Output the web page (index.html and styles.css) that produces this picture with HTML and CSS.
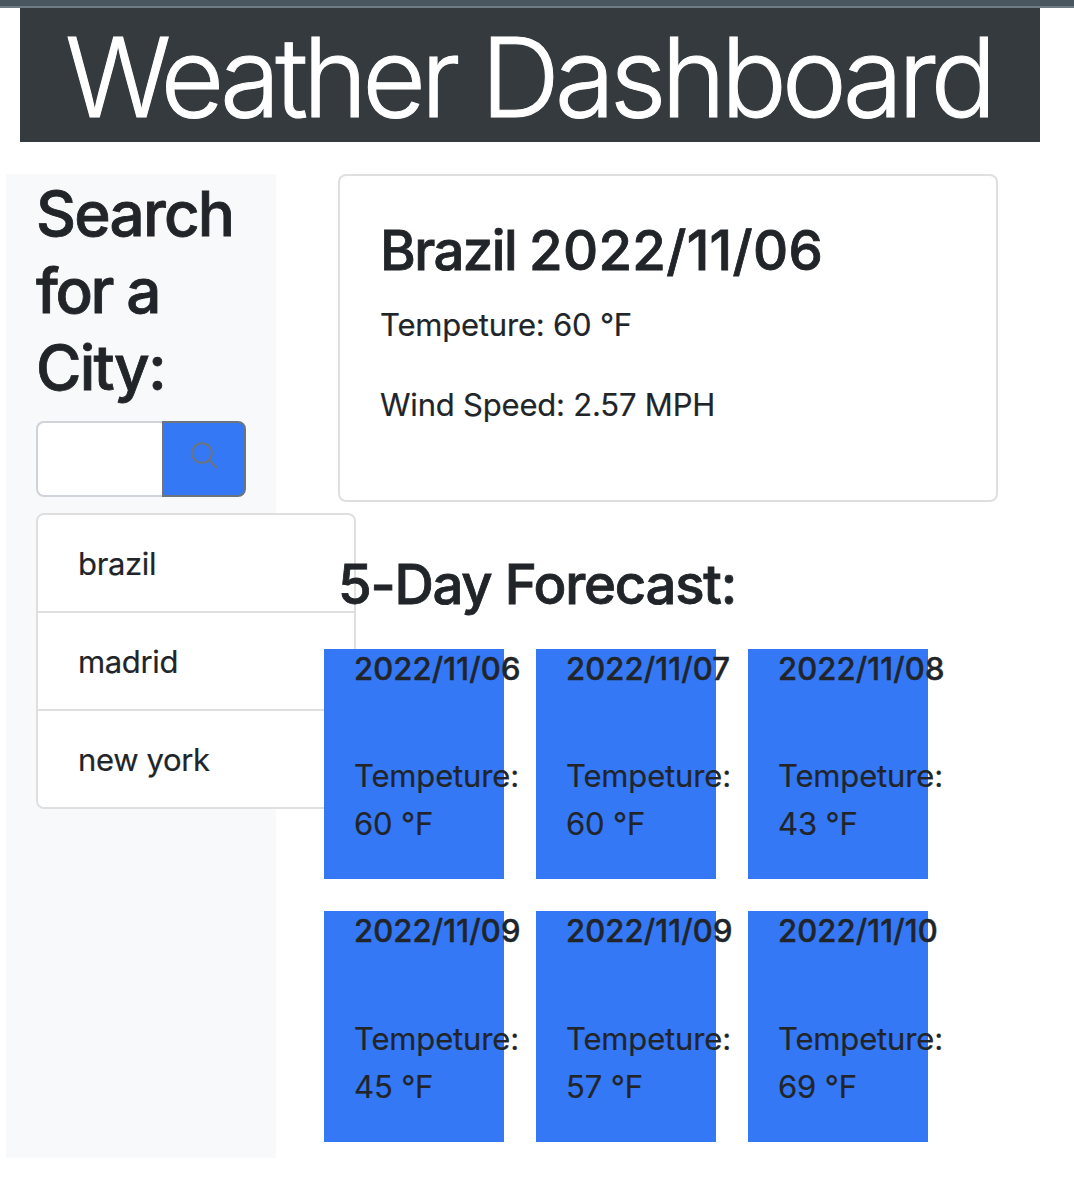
FILE: index.html
```html
<!DOCTYPE html>
<html lang="en">
<head>
  <meta charset="utf-8">
  <title>Weather Dashboard</title>
  <link rel="stylesheet" href="styles.css">
</head>
<body>
  <div class="topbar"></div>
  <header class="header"><h1 class="title">Weather Dashboard</h1></header>
  <div class="layout">
    <aside class="sidebar">
      <h2 class="search-title">Search<br><span class="narrow">for a</span><br>City:</h2>
      <form class="search">
        <input class="search-input" type="text" aria-label="City">
        <button class="search-button" type="button" aria-label="Search">
          <svg class="search-icon" viewBox="0 0 28 28" fill="none" stroke="currentColor" stroke-width="2"><circle cx="12" cy="12" r="9.8"/><path d="M19 19l8 8"/></svg>
        </button>
      </form>
      <ul class="history">
        <li class="history-item">brazil</li>
        <li class="history-item">madrid</li>
        <li class="history-item">new york</li>
      </ul>
    </aside>
    <main class="main">
      <section class="current">
        <h3 class="current-title">Brazil <span class="current-date">2022/11/06</span></h3>
        <p class="current-line">Tempeture: 60 °F</p>
        <p class="current-line">Wind Speed: 2.57 MPH</p>
      </section>
      <h3 class="forecast-title">5-Day Forecast:</h3>
      <section class="forecast">
        <article class="day"><h5 class="date">2022/11/06</h5><p class="temp">Tempeture:<br>60 °F</p></article>
        <article class="day"><h5 class="date">2022/11/07</h5><p class="temp">Tempeture:<br>60 °F</p></article>
        <article class="day"><h5 class="date">2022/11/08</h5><p class="temp">Tempeture:<br>43 °F</p></article>
        <article class="day"><h5 class="date">2022/11/09</h5><p class="temp">Tempeture:<br>45 °F</p></article>
        <article class="day"><h5 class="date">2022/11/09</h5><p class="temp">Tempeture:<br>57 °F</p></article>
        <article class="day"><h5 class="date">2022/11/10</h5><p class="temp">Tempeture:<br>69 °F</p></article>
      </section>
    </main>
  </div>
</body>
</html>
```
FILE: styles.css
```css
* { box-sizing: border-box; margin: 0; padding: 0; }
body {
  min-height: 1204px;
  background: #fff;
  color: #212529;
  font: 400 31px/48px Inter, sans-serif;
  -webkit-text-stroke: 0.2px currentColor;
  overflow: hidden;
}
h1, h2, h3, h5 { font-weight: 500; white-space: nowrap; }
h2, h3 { -webkit-text-stroke: 0.8px currentColor; }
h5 { -webkit-text-stroke: 0.4px currentColor; }
.topbar { height: 8px; background: #48565f; border-bottom: 2px solid #6f7b83; }
.header { width: 1020px; height: 134px; margin-left: 20px; padding: 4px 0 0 45px; background: #353a3e; }
.title { color: #fff; font-size: 110px; line-height: 130px; font-weight: 300; letter-spacing: -5.25px; -webkit-text-stroke: 1px currentColor; }
.layout { display: flex; align-items: flex-start; gap: 48px; margin: 32px 0 0 6px; }
.sidebar { flex: none; width: 270px; height: 984px; padding: 2px 30px 0; background: #f8f9fb; }
.search-title { height: 245px; font-size: 62px; line-height: 76.8px; letter-spacing: -1.8px; }
.narrow { letter-spacing: -2.4px; }
.search { display: flex; width: 210px; height: 76px; }
.search-input { width: 126px; border: 2px solid #ced4da; border-right: 0; border-radius: 8px 0 0 8px; background: #fff; }
.search-button { display: flex; width: 84px; padding: 18px 0 0 26px; border: 2px solid #6c757d; border-radius: 0 8px 8px 0; background: #3478f6; color: #6c757d; }
.search-icon { width: 28px; height: 28px; }
.history { width: 320px; margin-top: 16px; border: 2px solid #dfdfdf; border-radius: 8px; background: #fff; list-style: none; }
.history-item { height: 98px; padding: 25px 40px 0; border-bottom: 2px solid #dfdfdf; letter-spacing: -0.35px; }
.history-item:last-child { height: 96px; border-bottom: 0; }
.main { flex: none; width: 674px; }
.current { height: 328px; width: 660px; margin-left: 14px; padding: 41px 40px 0; border: 2px solid #dfdfdf; border-radius: 8px; }
.current-title { margin-bottom: 17px; font-size: 54.5px; line-height: 67.2px; letter-spacing: -1.57px; }
.current-date { letter-spacing: 0.3px; }
.current-line { margin-bottom: 32px; letter-spacing: -0.2px; }
.forecast-title { height: 98px; margin: 49px 0 0 14px; font-size: 54.5px; line-height: 67.2px; letter-spacing: -1.25px; }
.forecast { display: grid; grid-template-columns: repeat(3, 180px); grid-auto-rows: 230.4px; gap: 32px; }
.day { padding-left: 30px; background: #3478f6; }
.date { height: 103.2px; font-size: 31px; line-height: 39px; letter-spacing: 0.1px; }
.temp { letter-spacing: -0.15px; }
```
